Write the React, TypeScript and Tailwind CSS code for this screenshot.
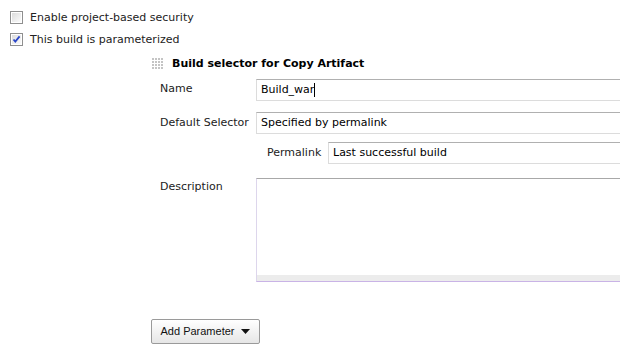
import React from "react";

function Checkbox({ checked }: { checked?: boolean }) {
  return (
    <svg width="13" height="13" viewBox="0 0 13 13" className="shrink-0">
      <defs>
        <linearGradient id={checked ? "cbg1" : "cbg0"} x1="0" y1="0" x2="1" y2="1">
          <stop offset="0" stopColor="#dcdcdc" />
          <stop offset="1" stopColor="#fbfbfb" />
        </linearGradient>
      </defs>
      <rect x="0.5" y="0.5" width="12" height="12" fill="#fff" stroke="#8f8f8f" />
      <rect x="2" y="2" width="9" height="9" fill={`url(#${checked ? "cbg1" : "cbg0"})`} />
      {checked && (
        <path d="M3.5 6.5 L5.3 8.6 L9.6 3.4" fill="none" stroke="#2a46c8" strokeWidth="1.8" />
      )}
    </svg>
  );
}

function Grip() {
  const dots = [];
  for (let r = 0; r < 4; r++)
    for (let c = 0; c < 4; c++)
      dots.push(<rect key={`${r}-${c}`} x={c * 3} y={r * 3} width="2" height="2" fill="#c4c4c4" />);
  return (
    <svg width="12" height="12" viewBox="0 0 12 12" className="shrink-0">
      {dots}
    </svg>
  );
}

function TextBox({ value, cursor }: { value: string; cursor?: boolean }) {
  return (
    <div className="w-[420px] shrink-0 h-[22px] border border-[#dcdcdc] border-t-[#b0b0b0] bg-white flex items-center pl-[4px] text-black whitespace-nowrap">
      <span>{value}</span>
      {cursor && <span className="inline-block w-px h-[14px] bg-black" />}
    </div>
  );
}

export default function App() {
  return (
    <div
      className="w-[620px] h-[348px] overflow-hidden bg-white text-[11px] text-[#222]"
      style={{ fontFamily: '"DejaVu Sans", Verdana, sans-serif' }}
    >
      {/* Top options */}
      <div className="pt-[11px] pl-[10px] flex flex-col gap-[9px]">
        <label className="flex items-center gap-[7px] h-[13px]">
          <Checkbox />
          <span className="pt-[2px]">Enable project-based security</span>
        </label>
        <label className="flex items-center gap-[7px] h-[13px]">
          <Checkbox checked />
          <span className="pt-[2px]">This build is parameterized</span>
        </label>
      </div>

      {/* Parameter block */}
      <div className="ml-[152px] mt-[10px]">
        <div className="flex items-center gap-[8px] h-[16px]">
          <Grip />
          <span className="font-bold text-black whitespace-nowrap">Build selector for Copy Artifact</span>
        </div>

        <div className="ml-[8px] mt-[7px] flex flex-col">
          {/* Name */}
          <div className="flex items-start">
            <div className="w-[96px] shrink-0 pt-[2px] whitespace-nowrap">Name</div>
            <TextBox value="Build_war" cursor />
          </div>

          {/* Default Selector */}
          <div className="flex items-start mt-[11px]">
            <div className="w-[96px] shrink-0 pt-[3px] whitespace-nowrap">Default Selector</div>
            <TextBox value="Specified by permalink" />
          </div>

          {/* Permalink */}
          <div className="flex items-start mt-[8px] ml-[107px]">
            <div className="w-[61px] shrink-0 pt-[3px] whitespace-nowrap">Permalink</div>
            <TextBox value="Last successful build" />
          </div>

          {/* Description */}
          <div className="flex items-start mt-[14px]">
            <div className="w-[96px] shrink-0 pt-[1px] whitespace-nowrap">Description</div>
            <div className="w-[420px] shrink-0 h-[104px] border border-[#ddd6ec] border-t-[#a8a8a8] border-b-[#c9b3e6] bg-white flex flex-col">
              <div className="flex-1" />
              <div className="h-[6px] bg-[#ececec]" />
            </div>
          </div>
        </div>

        {/* Add parameter */}
        <button
          className="mt-[37px] ml-[-1px] w-[109px] h-[25px] border border-[#9a9a9a] rounded-[2px] bg-gradient-to-b from-white to-[#e6e6e6] flex items-center justify-center gap-[7px] text-[#111] text-[11px] whitespace-nowrap"
          style={{ fontFamily: '"Liberation Sans", Arial, sans-serif' }}
        >
          <span>Add Parameter</span>
          <svg width="9" height="5" viewBox="0 0 9 5">
            <path d="M0 0 H9 L4.5 5 Z" fill="#111" />
          </svg>
        </button>
      </div>
    </div>
  );
}
